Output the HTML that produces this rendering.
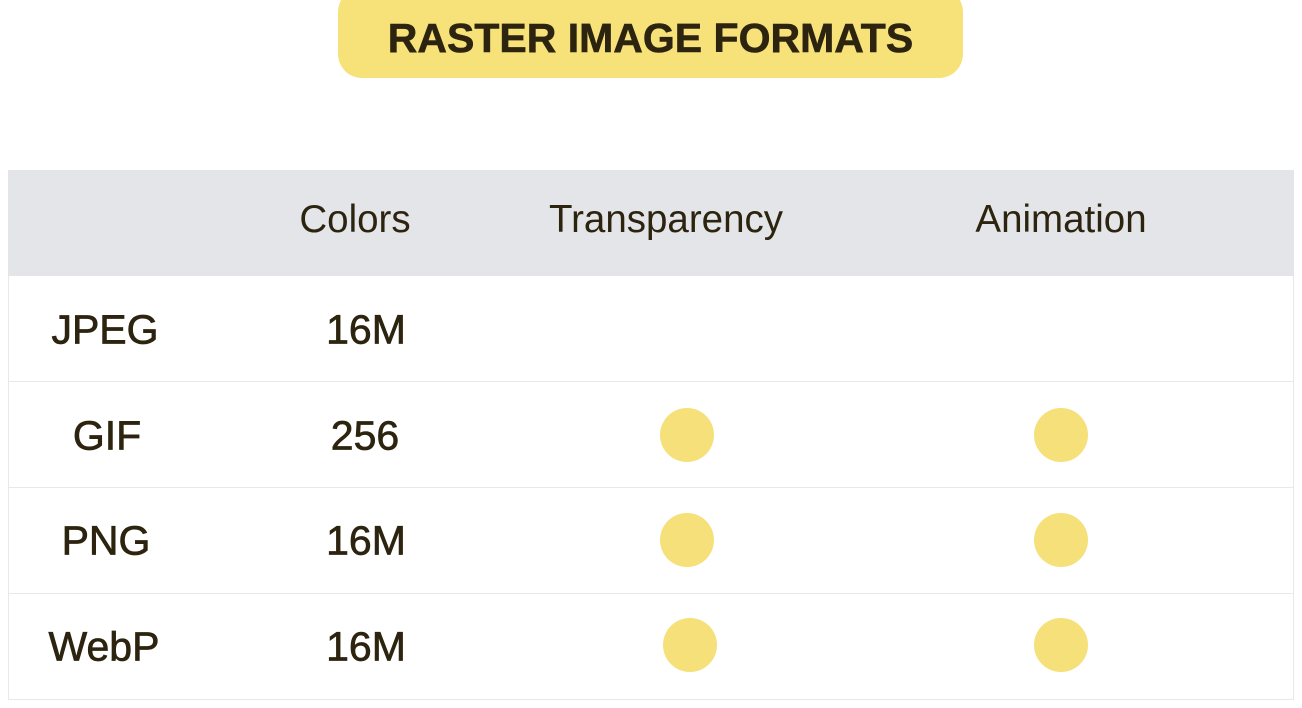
<!DOCTYPE html>
<html><head><style>
body{margin:0;width:1302px;height:708px;background:#fff;position:relative;overflow:hidden;font-family:"Liberation Sans",sans-serif;color:#2d2410}
.pill{position:absolute;left:338px;top:-12px;width:625px;height:90px;background:#f7e27a;border-radius:24px;text-align:center;line-height:90px;font-weight:bold;font-size:41px;-webkit-text-stroke:0.6px #2d2410}
.pill span{position:relative;top:5px}
.hdr{position:absolute;left:8px;top:170px;width:1286px;height:106px;background:#e4e5e9}
.t{position:absolute;transform:translate(-50%,-50%);white-space:nowrap}
.h{font-size:38.5px}
.r{font-size:41px;-webkit-text-stroke:0.7px #2d2410}
.row{position:absolute;left:8px;width:1284px;height:105px;border:1px solid #e8e8ea;border-top:none}
.c{position:absolute;width:54px;height:54px;border-radius:50%;background:#f6e07a;transform:translate(-50%,-50%)}
</style></head><body>
<div class="pill"><span>RASTER IMAGE FORMATS</span></div>
<div class="hdr"></div>
<div class="t h" style="left:355px;top:220px">Colors</div>
<div class="t h" style="left:666px;top:220px">Transparency</div>
<div class="t h" style="left:1061px;top:220px">Animation</div>
<div class="row" style="top:276px"></div>
<div class="row" style="top:382px"></div>
<div class="row" style="top:488px"></div>
<div class="row" style="top:594px"></div>
<div class="t r" style="left:105px;top:330px">JPEG</div>
<div class="t r" style="left:366px;top:330px">16M</div>
<div class="t r" style="left:107px;top:436px">GIF</div>
<div class="t r" style="left:365px;top:436px">256</div>
<div class="t r" style="left:106px;top:541px">PNG</div>
<div class="t r" style="left:366px;top:541px">16M</div>
<div class="t r" style="left:104px;top:647px">WebP</div>
<div class="t r" style="left:366px;top:647px">16M</div>
<div class="c" style="left:687px;top:435px"></div>
<div class="c" style="left:1061px;top:435px"></div>
<div class="c" style="left:687px;top:540px"></div>
<div class="c" style="left:1061px;top:540px"></div>
<div class="c" style="left:690px;top:645px"></div>
<div class="c" style="left:1061px;top:645px"></div>
</body></html>
